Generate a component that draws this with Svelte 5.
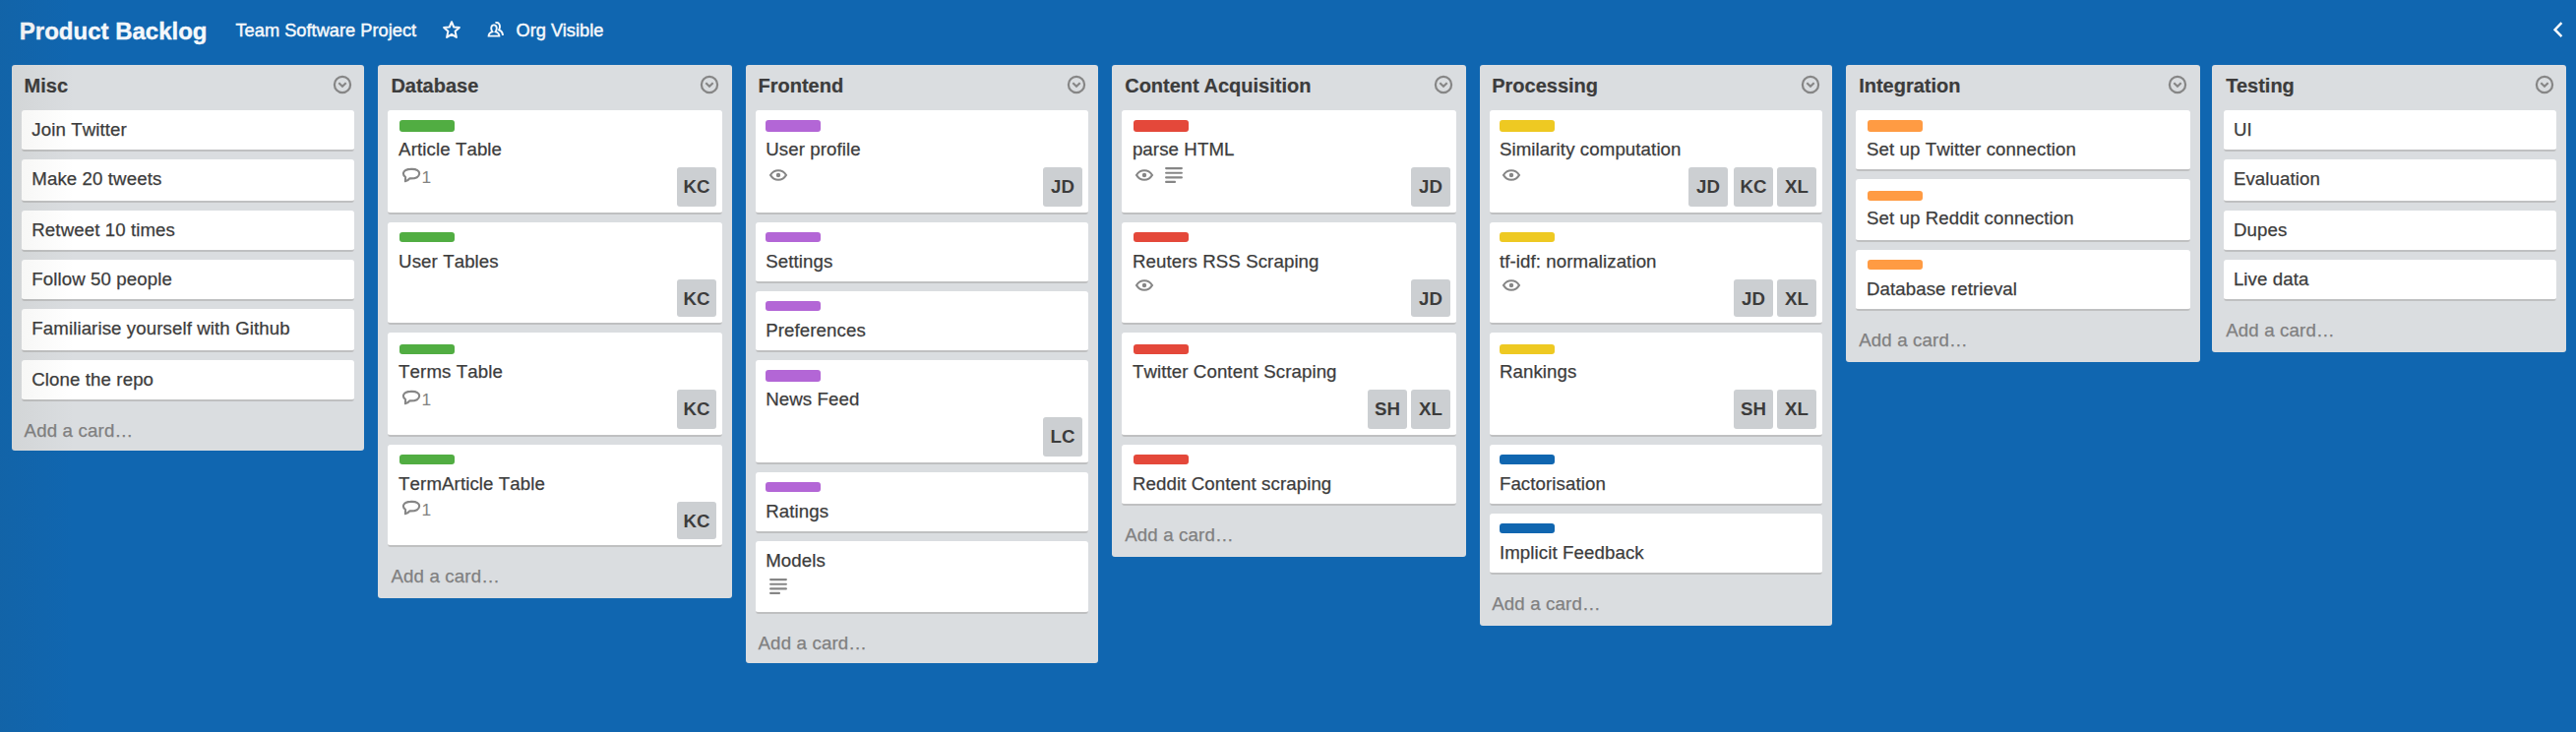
<script>
  const green = '#51ad42', purple = '#b366d6', red = '#e4483a', yellow = '#eec922', orange = '#ff9b43', blue = '#1066b0';

  // h: card height, top/lh: label offset and label height
  const lists = [
    { name: 'Misc', w: 358, gap: 14, dx: 12.6, inset: 10, label: 10, foot: 50, cards: [
      { t: 'Join Twitter', h: 42 },
      { t: 'Make 20 tweets', h: 44 },
      { t: 'Retweet 10 times', h: 42 },
      { t: 'Follow 50 people', h: 42 },
      { t: 'Familiarise yourself with Github', h: 44 },
      { t: 'Clone the repo', h: 42 } ] },
    { name: 'Database', w: 360, gap: 14, dx: 13.4, inset: 10, label: 12, foot: 52, cards: [
      { t: 'Article Table', c: green, h: 106, lh: 12, badges: ['comment'], m: ['KC'] },
      { t: 'User Tables', c: green, h: 104, m: ['KC'] },
      { t: 'Terms Table', c: green, h: 106, top: 12, badges: ['comment'], m: ['KC'] },
      { t: 'TermArticle Table', c: green, h: 104, badges: ['comment'], m: ['KC'] } ] },
    { name: 'Frontend', w: 358, gap: 14, dx: 12.5, inset: 10, label: 10, foot: 50, cards: [
      { t: 'User profile', c: purple, h: 106, lh: 12, badges: ['eye'], m: ['JD'] },
      { t: 'Settings', c: purple, h: 62 },
      { t: 'Preferences', c: purple, h: 62 },
      { t: 'News Feed', c: purple, h: 106, lh: 12, m: ['LC'] },
      { t: 'Ratings', c: purple, h: 62 },
      { t: 'Models', h: 74, badges: ['lines'] } ] },
    { name: 'Content Acquisition', w: 360, gap: 14, dx: 13.2, inset: 10, label: 12, foot: 52, cards: [
      { t: 'parse HTML', c: red, h: 106, lh: 12, badges: ['eye', 'lines'], m: ['JD'] },
      { t: 'Reuters RSS Scraping', c: red, h: 104, badges: ['eye'], m: ['JD'] },
      { t: 'Twitter Content Scraping', c: red, h: 106, top: 12, m: ['SH', 'XL'] },
      { t: 'Reddit Content scraping', c: red, h: 62 } ] },
    { name: 'Processing', w: 358, gap: 14, dx: 12.2, inset: 10, label: 10, foot: 52, cards: [
      { t: 'Similarity computation', c: yellow, h: 106, lh: 12, badges: ['eye'], m: ['JD', 'KC', 'XL'] },
      { t: 'tf-idf: normalization', c: yellow, h: 104, badges: ['eye'], m: ['JD', 'XL'] },
      { t: 'Rankings', c: yellow, h: 106, top: 12, m: ['SH', 'XL'] },
      { t: 'Factorisation', c: blue, h: 62 },
      { t: 'Implicit Feedback', c: blue, h: 62 } ] },
    { name: 'Integration', w: 360, gap: 12, dx: 13.2, inset: 10, label: 12, foot: 52, cards: [
      { t: 'Set up Twitter connection', c: orange, h: 62, lh: 12 },
      { t: 'Set up Reddit connection', c: orange, h: 64, top: 12 },
      { t: 'Database retrieval', c: orange, h: 62 } ] },
    { name: 'Testing', w: 360, gap: 0, dx: 14.2, inset: 12, label: 10, foot: 52, cards: [
      { t: 'UI', h: 42 },
      { t: 'Evaluation', h: 44 },
      { t: 'Dupes', h: 42 },
      { t: 'Live data', h: 42 } ] }
  ];
</script>

<div class="board">
  <header class="bar">
    <h1>Product Backlog</h1>
    <span class="org">Team Software Project</span>
    <svg class="star" width="20" height="20" viewBox="0 0 20 20"><path d="M10 2.2 L12.2 7.5 L17.9 8 L13.6 11.8 L14.9 17.9 L10 14.8 L5.1 17.9 L6.4 11.8 L2.1 8 L7.8 7.5 Z" /></svg>
    <svg class="people" width="18" height="18" viewBox="0 0 18 18"><path d="M1.6 15.6 C1.6 13 2.8 12 5.4 11.3 C3.5 8.6 3.9 4.4 7 4.4 C10.1 4.4 10.5 8.6 8.6 11.3 C11.2 12 12.4 13 12.4 15.6 Z M8.4 2.2 C12.4 .9 14.2 5.4 12 9.4 C14.8 10.4 16 11.8 16 15" /></svg>
    <span class="vis">Org Visible</span>
    <svg class="back" width="12" height="18" viewBox="0 0 12 18"><path d="M9.4 2.2 L2.6 9.2 L9.4 16.2" /></svg>
  </header>

  <main class="lists">
    {#each lists as list}
      <section class="list" style="width:{list.w}px;margin-right:{list.gap}px;--dx:{list.dx}px;--inset:{list.inset}px;--label:{list.label}px">
        <div class="head">
          <h2>{list.name}</h2>
          <svg class="menu" width="20" height="20" viewBox="0 0 20 20"><circle cx="10" cy="10" r="8.1" /><path d="M6.3 8.3 L10 11.7 L13.7 8.3" /></svg>
        </div>
        <div class="cards">
          {#each list.cards as card}
            <article class="card" style="height:{card.h}px">
              {#if card.c}
                <div class="labels" style="padding-top:{card.top ?? 10}px"><i style="background:{card.c};height:{card.lh ?? 10}px"></i></div>
              {/if}
              <p class:plain={!card.c}>{card.t}</p>
              {#if card.badges || card.m}
                <div class="foot">
                  <div class="badges" class:tight={card.h === 104}>
                    {#each card.badges ?? [] as badge}
                      {#if badge === 'eye'}
                        <svg width="20" height="20" viewBox="0 0 20 20"><path d="M2 10 C5.8 3.7 14.2 3.7 18 10 C14.2 16.3 5.8 16.3 2 10 Z" /><circle class="dot" cx="10" cy="10" r="2.2" /></svg>
                      {:else if badge === 'lines'}
                        <svg width="20" height="20" viewBox="0 0 20 20"><path d="M2.1 3.1 H17.9 M2.1 7.8 H17.9 M2.1 12.4 H17.9 M2.1 16.9 H11" stroke-linecap="round" /></svg>
                      {:else}
                        <svg width="20" height="20" viewBox="0 0 20 20"><path d="M3.9 16.3 L4.1 12 C-.2 8.5 2.3 4.1 9.2 3.9 C15.5 3.4 18.6 5.8 18.1 8.8 C17.6 12 13.5 13.6 8.3 13.4 C7.2 15 5.8 15.9 3.9 16.3 Z" stroke-linejoin="round" /></svg>
                        <span>1</span>
                      {/if}
                    {/each}
                  </div>
                  <div class="members">
                    {#each card.m ?? [] as who}
                      <b class:short={card.h === 104}>{who}</b>
                    {/each}
                  </div>
                </div>
              {/if}
            </article>
          {/each}
        </div>
        <div class="add" style="height:{list.foot}px">Add a card…</div>
      </section>
    {/each}
  </main>
  <div class="shade"></div>
</div>

<style>
  :global(body) { margin: 0; background: #1066b0; }
  .board {
    position: relative;
    box-sizing: border-box;
    width: 2618px;
    height: 744px;
    overflow: hidden;
    background: #1066b0;
    color: #3c3c3c;
    font-family: "Liberation Sans", Arial, sans-serif;
    font-size: 18.67px;
    line-height: 24px;
  }
  svg { display: block; flex: none; fill: none; }
  .bar {
    display: flex;
    align-items: flex-start;
    box-sizing: border-box;
    height: 66px;
    padding: 19px 12px 0 19.8px;
    color: #f5f8fb;
    white-space: nowrap;
  }
  .bar svg { stroke: #f5f8fb; stroke-width: 2; }
  h1 { width: 219.7px; margin: 0; padding-top: 1px; font-size: 24px; line-height: 24px; -webkit-text-stroke: 0.4px currentColor; }
  .org { width: 210px; }
  .org, .vis { font-size: 18.25px; -webkit-text-stroke: 0.45px currentColor; }
  .star { margin-top: 1px; stroke-linejoin: round; }
  .bar .people { margin: 2px 11px 0 26px; stroke-width: 1.9; }
  .back { margin: 2px 0 0 auto; }
  .bar .back { stroke-width: 2.5; }
  .lists { display: flex; align-items: flex-start; padding-left: 12px; }
  .list { flex: none; background: #dadde0; border-radius: 3px; }
  .head {
    display: flex;
    box-sizing: border-box;
    height: 46px;
    padding: 9px 0 0 var(--dx);
  }
  h2 { width: 313.6px; margin: 0; font-size: 20px; line-height: 24px; -webkit-text-stroke: 0.2px currentColor; }
  .menu { margin-top: 1px; stroke: #868686; stroke-width: 2.2; }
  .cards { display: flex; flex-direction: column; gap: 8px; padding: 0 10px 0 var(--inset); }
  .card {
    box-sizing: border-box;
    background: #fff;
    border-bottom: 2px solid #bfc0c1;
    border-radius: 3px;
  }
  .labels { box-sizing: border-box; height: 28px; padding-left: calc(var(--label) + 10px - var(--inset)); }
  .labels i { display: block; width: 56px; border-radius: 3px; }
  p {
    margin: 0;
    padding-left: calc(var(--dx) - var(--inset) + 7.7px);
    white-space: nowrap;
    font-kerning: none;
    letter-spacing: 0.1px;
    -webkit-text-stroke: 0.25px currentColor;
  }
  p.plain { padding-top: 8px; }
  .foot { display: flex; justify-content: space-between; padding: 0 6px 0 calc(var(--dx) - var(--inset) + 10.2px); }
  .badges { display: flex; gap: 9.3px; height: 28px; padding-top: 4px; box-sizing: border-box; color: #828282; }
  .badges.tight { padding-top: 2px; }
  .badges svg { stroke: #868686; stroke-width: 2.1; }
  .badges .dot { fill: #868686; stroke: none; }
  .badges span { margin-left: -8.3px; font-size: 17.4px; line-height: 24px; }
  .members { display: flex; gap: 4px; padding-top: 6px; }
  .members b {
    width: 40px;
    height: 40px;
    border-radius: 3px;
    background: #cccfd2;
    text-align: center;
    line-height: 39px;
  }
  .members b.short { height: 38px; }
  .members b:nth-last-child(3) { margin-right: 2px; }
  .add {
    box-sizing: border-box;
    padding: 18px 0 0 var(--dx);
    color: #808080;
    letter-spacing: 0.16px;
    -webkit-text-stroke: 0.25px currentColor;
  }
  .shade {
    position: absolute;
    inset: 0 auto 0 0;
    width: 76px;
    background: linear-gradient(90deg, rgba(60, 60, 30, .055), rgba(60, 60, 30, 0));
    pointer-events: none;
  }
</style>
